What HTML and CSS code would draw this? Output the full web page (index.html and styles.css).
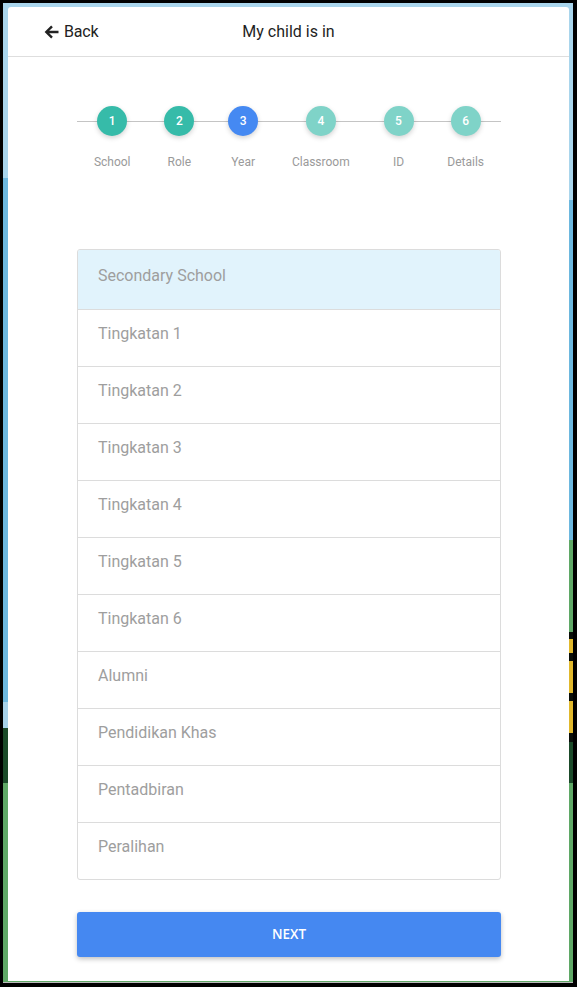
FILE: index.html
```html
<!DOCTYPE html>
<html lang="en">

<head>
	<meta charset="UTF-8">
	<meta name="viewport" content="width=device-width, initial-scale=1.0">
	<title>My child is in</title>
	<link rel="stylesheet" href="styles.css">
</head>

<body>
	<div class="frame">
		<div class="card">
			<header class="topbar">
				<a class="back" href="#">
					<svg width="15" height="14" viewBox="0 0 15 14" aria-hidden="true">
						<path d="M14.5 7H2.5M8 1.3L2.3 7 8 12.7" fill="none" stroke="currentColor" stroke-width="2.4" />
					</svg>
					<span>Back</span>
				</a>
				<h1 class="title">My child is in</h1>
				<span></span>
			</header>

			<main class="content">
				<ol class="stepper">
					<li class="step done"><span class="dot">1</span><span class="label">School</span></li>
					<li class="step done"><span class="dot">2</span><span class="label">Role</span></li>
					<li class="step current"><span class="dot">3</span><span class="label">Year</span></li>
					<li class="step"><span class="dot">4</span><span class="label">Classroom</span></li>
					<li class="step"><span class="dot">5</span><span class="label">ID</span></li>
					<li class="step"><span class="dot">6</span><span class="label">Details</span></li>
				</ol>

				<ul class="options">
					<li class="option heading">Secondary School</li>
					<li class="option">Tingkatan 1</li>
					<li class="option">Tingkatan 2</li>
					<li class="option">Tingkatan 3</li>
					<li class="option">Tingkatan 4</li>
					<li class="option">Tingkatan 5</li>
					<li class="option">Tingkatan 6</li>
					<li class="option">Alumni</li>
					<li class="option">Pendidikan Khas</li>
					<li class="option">Pentadbiran</li>
					<li class="option">Peralihan</li>
				</ul>

				<button class="next" type="button">NEXT</button>
			</main>
		</div>
	</div>
</body>

</html>
```

FILE: styles.css
```css
html,
body {
	margin: 0;
	height: 100%;
	background: #000;
}

body {
	font-family: Roboto, "Liberation Sans", Arial, sans-serif;
	color: #222;
	overflow: hidden;
}

/* coloured strips of the app behind the sheet */
.frame {
	margin: 3px 4px 0 3px;
	padding: 4px 4px 1px 5px;
	border-bottom: 1px solid #b9b9b9;
	background:
		linear-gradient(to bottom,
			#a9d5ec 0 175px,
			#6db8df 175px 699px,
			#a7d2ea 699px 725px,
			#1b4a29 725px 780px,
			#5fa866 780px) left top / 50% 100% no-repeat,
		linear-gradient(to bottom,
			#a9d5ec 0 197px,
			#6db8df 197px 537px,
			#5fa866 537px 629px,
			#0a0f0a 629px 636px,
			#e0b82c 636px 650px,
			#0a0f0a 650px 658px,
			#e0b82c 658px 690px,
			#0a0f0a 690px 698px,
			#e0b82c 698px 730px,
			#0a0f0a 730px 739px,
			#1b4a29 739px 780px,
			#5fa866 780px) right top / 50% 100% no-repeat;
}

.card {
	height: 974px;
	background: #fff;
	border-radius: 3px 3px 0 0;
}

.topbar {
	display: grid;
	grid-template-columns: 1fr auto 1fr;
	align-items: center;
	height: 49px;
	padding: 0 36px;
	border-bottom: 1px solid #dedede;
}

.back {
	display: flex;
	align-items: center;
	gap: 5px;
	color: #222;
	text-decoration: none;
	font-size: 16px;
	letter-spacing: -0.2px;
}

.back svg {
	margin-top: 1px;
}

.title {
	margin: 0;
	font-size: 16px;
	font-weight: 400;
	color: #1e1e1e;
}

.content {
	padding: 0 68px 0 69px;
}

.stepper {
	position: relative;
	display: flex;
	justify-content: space-around;
	list-style: none;
	margin: 49px 0 0;
	padding: 0;
}

.stepper::before {
	content: "";
	position: absolute;
	left: 0;
	right: 0;
	top: 15px;
	height: 1px;
	background: #c4c4c4;
}

.step {
	position: relative;
	display: flex;
	flex-direction: column;
	align-items: center;
	min-width: 30px;
}

.dot {
	display: flex;
	align-items: center;
	justify-content: center;
	width: 30px;
	height: 30px;
	border-radius: 50%;
	background: #7fd3c8;
	color: #fff;
	font-size: 12px;
	font-weight: 500;
	box-shadow: 0 2px 5px rgba(0, 0, 0, 0.18);
}

.step.done .dot {
	background: #36bba9;
}

.step.current .dot {
	background: #4589f2;
}

.label {
	margin-top: 19px;
	font-size: 12px;
	color: #9a9a9a;
}

.options {
	list-style: none;
	margin: 80px 0 0;
	padding: 0;
	border: 1px solid #dcdcdc;
	border-radius: 3px;
	overflow: hidden;
}

.option {
	height: 57px;
	box-sizing: border-box;
	padding: 14px 20px 0;
	font-size: 16px;
	color: #9e9e9e;
	border-top: 1px solid #dcdcdc;
}

.option.heading {
	height: 59px;
	padding-top: 16px;
	border-top: 0;
	background: #e1f3fc;
}

.next {
	display: block;
	width: 100%;
	height: 45px;
	margin-top: 32px;
	padding-bottom: 2px;
	border: 0;
	border-radius: 3px;
	background: #4588f1;
	color: #fff;
	font-family: "Open Sans", Roboto, sans-serif;
	font-size: 13.5px;
	font-weight: 600;
	box-shadow: 0 2px 5px rgba(0, 0, 0, 0.25);
	cursor: pointer;
}
```
